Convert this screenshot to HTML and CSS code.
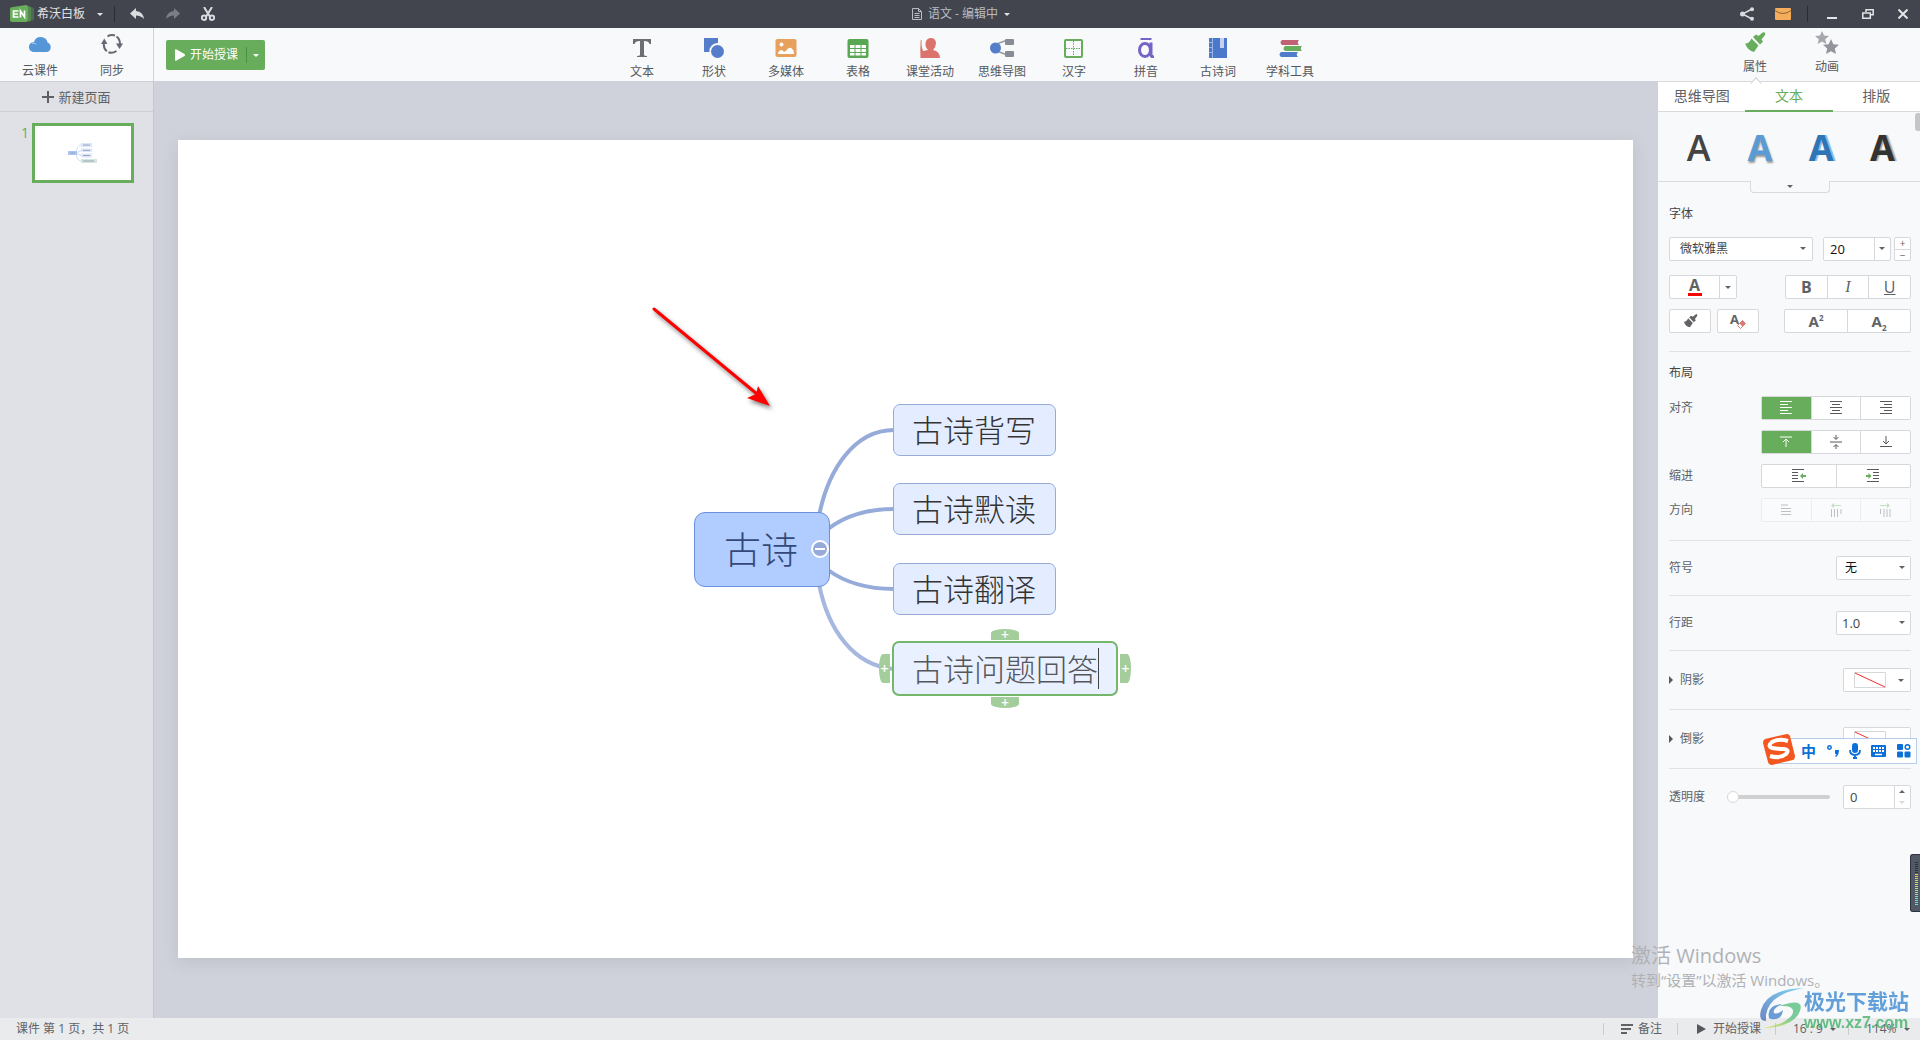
FILE: index.html
```html
<!DOCTYPE html>
<html lang="zh-CN">
<head>
<meta charset="utf-8">
<title>希沃白板</title>
<link rel="stylesheet" href="styles.css">
</head>
<body>
<div class="app">
  <header class="titlebar">
    <div class="title-left">
      <button class="brand" type="button">
        <svg width="24" height="18" viewBox="0 0 24 18"><path d="M20 2l4 1v12l-4 1z" fill="#4a6b4d"/><path d="M18 1l3 1v14l-3 1z" fill="#55894f"/><path d="M3 2L16 0q2 0 2 2v13q0 2-2 2H2q-2 0-2-2V4q0-2 3-2z" fill="#67ad5b"/><path d="M8.500 6H3.500v6h5M3.500 9h4.500M10.500 12.500V6l4 6V5.500" fill="none" stroke="#fff" stroke-width="1.700"/></svg>
        <span>希沃白板</span><i class="caret"></i>
      </button>
      <i class="title-sep"></i>
      <button class="icon-btn" type="button" aria-label="撤销"><svg width="14" height="12" viewBox="0 0 14 12"><path d="M0 5.500L6 0v3q7 .5 8 8Q11 7.500 6 7.500V11z" fill="#d9dbdf"/></svg></button>
      <button class="icon-btn" type="button" aria-label="重做"><svg width="14" height="12" viewBox="0 0 14 12"><path d="M14 5.500L8 0v3Q1 3.500 0 11q3-3.500 8-3.500V11z" fill="#7b7e87"/></svg></button>
      <button class="icon-btn" type="button" aria-label="剪切"><svg width="14" height="14" viewBox="0 0 14 14" fill="none" stroke="#d9dbdf" stroke-width="2"><path d="M3 0l5.500 9M11 0L5.500 9"/><circle cx="3" cy="10.700" r="2.200"/><circle cx="11" cy="10.700" r="2.200"/></svg></button>
    </div>
    <button class="doc-title" type="button">
      <svg width="10" height="12" viewBox="0 0 10 12" fill="none" stroke="#b9bcc2"><path d="M.5.500h6l3 3v8h-9zM6.500.500v3h3M2.500 5.500h5M2.500 7.500h5M2.500 9.500h5"/></svg>
      <span>语文 - 编辑中</span><i class="caret"></i>
    </button>
    <div class="title-right">
      <button class="icon-btn" type="button" aria-label="分享"><svg width="14" height="14" viewBox="0 0 14 14"><path d="M12 2L2.500 7l9.500 5" fill="none" stroke="#d9dbdf" stroke-width="1.500"/><g fill="#d9dbdf"><circle cx="2.500" cy="7" r="2.500"/><circle cx="12" cy="2.200" r="2"/><circle cx="12" cy="11.800" r="2"/></g></svg></button>
      <button class="icon-btn" type="button" aria-label="消息"><svg width="16" height="12" viewBox="0 0 16 12"><rect width="16" height="12" rx="1" fill="#f5ad5c"/><path d="M0 2.500q8 6 16 0" fill="none" stroke="#8d6436"/></svg></button>
      <i class="title-sep"></i>
      <button class="icon-btn" type="button" aria-label="最小化"><svg width="10" height="12"><path d="M0 9h10v2H0z" fill="#e3e4e7"/></svg></button>
      <button class="icon-btn" type="button" aria-label="还原"><svg width="12" height="10" viewBox="0 0 12 10" fill="none" stroke="#e3e4e7" stroke-width="1.500"><path d="M4 3V.8h7.200v5H9M.8 4h7.500v5.200H.8z"/></svg></button>
      <button class="icon-btn" type="button" aria-label="关闭"><svg width="10" height="10" viewBox="0 0 10 10"><path d="M.5.500l9 9M9.500.500l-9 9" stroke="#e3e4e7" stroke-width="2"/></svg></button>
    </div>
  </header>

  <div class="toolbar">
    <div class="tool-left">
      <div class="tool-cloud">
        <button class="tool" type="button"><svg width="24" height="18" viewBox="0 0 24 18"><path d="M5 17a5 5 0 0 1-1-9.500Q5.500 7 6 7a7 7 0 0 1 13.500.5A5 5 0 0 1 19 17z" fill="#5596d8"/><path d="M4 8.500q3-1 4.500 1" fill="none" stroke="#a9cbee"/></svg><span>云课件</span></button>
        <button class="tool" type="button"><svg width="22" height="20" viewBox="0 0 22 20"><g fill="none" stroke="#666a70" stroke-width="2"><path d="M6.500 2.300Q10 .3 14 1.500M15.500 2.500Q19.500 5.500 18.800 11M15.500 17Q11.500 19.700 7.500 18.300M5.800 17.300Q2 14 3 8"/></g><path d="M15 9.500h7l-3.500 5.500zM0 10h6.500L3.300 4.500z" fill="#666a70"/></svg><span>同步</span></button>
      </div>
      <div class="start">
        <button class="start-main" type="button"><svg width="10" height="12" viewBox="0 0 10 12"><path d="M0 1q0-1 1.500-.5L9.500 5q1 1 0 2l-8 4.500Q0 12 0 11z" fill="#fff"/></svg><span>开始授课</span></button>
        <button class="start-more" type="button" aria-label="更多"><i class="caret"></i></button>
      </div>
    </div>
    <nav class="tools">
      <button class="tool" type="button"><svg width="22" height="20" viewBox="0 0 22 20"><path d="M2 1h18v5h-1.500Q18 3 13 3v14q0 1 3 1v1H6v-1q3 0 3-1V3Q4 3 3.500 6H2z" fill="#6b6e73"/></svg><span>文本</span></button>
      <button class="tool" type="button"><svg width="22" height="20" viewBox="0 0 22 20"><path d="M1 0h14v5a8 8 0 0 0-8.500 9H1z" fill="#567dca"/><circle cx="14.500" cy="13.500" r="6.500" fill="#567dca"/></svg><span>形状</span></button>
      <button class="tool" type="button"><svg width="22" height="20" viewBox="0 0 22 20"><rect x=".5" y="1" width="21" height="18" rx="2" fill="#e8a15c"/><circle cx="6.500" cy="6.500" r="2" fill="#fff"/><path d="M3 16q0-3 3-4 2 0 3 2 2-1 3-2.500Q14 9 16 10q3 1.500 3 6z" fill="#fff"/></svg><span>多媒体</span></button>
      <button class="tool" type="button"><svg width="22" height="20" viewBox="0 0 22 20"><rect x=".5" y="1" width="21" height="19" rx="2" fill="#59a653"/><path d="M3 7h4.500v3H3zM8.500 7h5v3h-5zM14.500 7H19v3h-4.500zM3 11h4.500v3H3zM8.500 11h5v3h-5zM14.500 11H19v3h-4.500zM3 15h4.500v2.500H3zM8.500 15h5v2.500h-5zM14.500 15H19v2.500h-4.500z" fill="#fff"/></svg><span>表格</span></button>
      <button class="tool" type="button"><svg width="22" height="20" viewBox="0 0 22 20"><path d="M2.500 2Q2 8 4 13l5-1q-3-3-2.500-7 1-5 5.500-5t5 5q0 4-3 7 7 1.500 7 8H1.500Q1 12 1.700 2z" fill="#d9736c"/></svg><span>课堂活动</span></button>
      <button class="tool" type="button"><svg width="26" height="20" viewBox="0 0 26 20"><path d="M9 5.500l8-3M9 13.500l8 3" stroke="#9a9ca2" stroke-width="1.500"/><circle cx="6.500" cy="10" r="5.500" fill="#567dca"/><rect x="16" y="1" width="9" height="6" rx="1" fill="#878c96"/><rect x="16" y="13" width="9" height="6" rx="1" fill="#878c96"/></svg><span>思维导图</span></button>
      <button class="tool" type="button"><svg width="22" height="20" viewBox="0 0 22 20" fill="none" stroke="#67ad5b"><rect x="2" y="2" width="17" height="17" rx="1" stroke-width="2"/><path d="M10.500 3v15M3 10.500h15" stroke-dasharray="1.500 1"/></svg><span>汉字</span></button>
      <button class="tool" type="button"><svg width="22" height="20" viewBox="0 0 22 20" fill="none" stroke="#7663c6"><path d="M5.500 1h11" stroke-width="2"/><ellipse cx="10" cy="12" rx="5.500" ry="6.500" stroke-width="3"/><path d="M16 4.500v12.500q0 2 3 1.700" stroke-width="3"/></svg><span>拼音</span></button>
      <button class="tool" type="button"><svg width="22" height="20" viewBox="0 0 22 20"><path d="M2 0h18v20H2z" fill="#4c78cc"/><path d="M13 0h4v10h-4z" fill="#c3d1ee"/><path d="M5.500 0v20M2 4.500h3M2 9.500h3M2 14.500h3" stroke="#9cb6e5"/></svg><span>古诗词</span></button>
      <button class="tool" type="button"><svg width="24" height="20" viewBox="0 0 24 20"><path d="M4 2h17q-2.500 2.500 0 5H4Q1 4.500 4 2z" fill="#bf6274"/><path d="M7 8h17q-2.500 2.500 0 5H7q-3-2.500 0-5z" fill="#67ad5b"/><path d="M3 14h17q-2.500 2.500 0 5H3q-3-2.500 0-5z" fill="#4f7ccb"/></svg><span>学科工具</span></button>
    </nav>
    <div class="tool-right">
      <button class="tool mode current" type="button"><svg width="22" height="21" viewBox="0 0 22 21" fill="#67ad5b"><path d="M20 0q2 1 1 3l-3.500 4.500 1.500 2-3 3L9 5l3-2.500 2.500 1.500L18 1z"/><path d="M7.500 6.500l7 7-4.500 6.500Q4 19 1 11.500q4 .5 6.500-5z"/></svg><span>属性</span></button>
      <button class="tool mode" type="button"><svg width="24" height="23" viewBox="0 0 24 23" fill="#92959b"><path d="M7 0l2 4.500 5 .5-3.800 3.300L11.400 13 7 10.500 2.600 13l1.200-4.700L0 5l5-.5z" fill="#a4a7ac"/><path d="M16 8l2.400 5.200 5.600.6-4.200 3.800L21 23l-5-2.800L11 23l1.200-5.400L8 13.800l5.600-.6z"/></svg><span>动画</span></button>
    </div>
  </div>

  <main class="workspace">
    <aside class="pages">
      <button class="new-page" type="button"><svg width="12" height="12"><path d="M6 0v12M0 6h12" stroke="#5c5f64" stroke-width="2"/></svg><span>新建页面</span></button>
      <div class="page-item">
        <span class="page-no">1</span>
        <button class="thumb" type="button" aria-label="第 1 页">
          <svg width="32" height="22" viewBox="0 0 32 22"><g fill="none" stroke="#cfdcf3"><path d="M9 11Q10 3 14 3M9 11l5-2.500M9 11l5 2.500M9 11q1 8 5 8"/></g><path d="M1 9h9v4H1z" fill="#a9c6f7"/><path d="M14 1h11v4H14zM14 6.500h11v3.500H14zM14 11.500h11v4H14z" fill="#dde7fb"/><rect x="14" y="17" width="16" height="4" fill="#d5e6df"/><path d="M3 11h5M16 3h7M16 8.300h7M16 13.500h7M16 19h11" stroke="#9aa3b8"/></svg>
        </button>
      </div>
    </aside>

    <section class="stage">
      <div class="slide">
        <svg class="links" width="1000" height="640" viewBox="0 0 1000 640">
          <g fill="none" stroke="#96abda" stroke-width="4"><path d="M641 376C650 330 676 290 716 290M650 389Q676 369 716 369M650 430Q676 449 716 449"/><path d="M641 444C650 490 676 526 716 529" stroke="#a6b8e0"/></g>
          <g class="pointer" fill="#f00" stroke="#f00"><path d="M476 169l103 85" stroke-width="3" stroke-linecap="round"/><path d="M592 266l-12-20-2 8-9 4z" stroke="none"/></g>
        </svg>
        <div class="node root">古诗</div>
        <button class="fold" type="button" aria-label="收起"></button>
        <div class="node child c1">古诗背写</div>
        <div class="node child c2">古诗默读</div>
        <div class="node child c3">古诗翻译</div>
        <div class="node child c4">古诗问题回答<i class="cursor"></i></div>
        <button class="add add-top" type="button">+</button>
        <button class="add add-left" type="button">+</button>
        <button class="add add-right" type="button">+</button>
        <button class="add add-bottom" type="button">+</button>
      </div>
    </section>

    <aside class="panel">
      <div class="tabs">
        <button type="button">思维导图</button><button class="on" type="button">文本</button><button type="button">排版</button>
      </div>
      <div class="presets">
        <button class="a1" type="button">A</button><button class="a2" type="button">A</button><button class="a3" type="button">A</button><button class="a4" type="button">A</button>
        <button class="expand" type="button" aria-label="展开"><i class="caret"></i></button>
        <i class="scroll"></i>
      </div>

      <div class="section font">
        <h2>字体</h2>
        <div class="row">
          <label class="pick family"><select aria-label="字体"><option>微软雅黑</option></select></label>
          <div class="row-end">
            <label class="pick size"><select aria-label="字号"><option>20</option></select></label>
            <div class="steps"><button type="button">+</button><button type="button">−</button></div>
          </div>
        </div>
        <div class="row">
          <div class="group color"><button type="button" aria-label="文字颜色"><span class="ink">A</span></button><button class="more" type="button" aria-label="更多颜色"><i class="caret"></i></button></div>
          <div class="group biu"><button type="button"><b>B</b></button><button type="button"><em>I</em></button><button type="button"><u>U</u></button></div>
        </div>
        <div class="row">
          <div class="pair">
            <div class="group brush"><button type="button" aria-label="格式刷"><svg width="15" height="14" viewBox="0 0 22 21" fill="#606266"><path d="M20 0q2 1 1 3l-3.500 4.500 1.500 2-3 3L9 5l3-2.500 2.500 1.500L18 1z"/><path d="M7.500 6.500l7 7-4.500 6.500Q4 19 1 11.500q4 .5 6.500-5z"/></svg></button></div>
            <div class="group brush"><button type="button" aria-label="清除格式"><span class="clear">A</span><svg width="9" height="9" viewBox="0 0 9 9"><path d="M5.500.500l3 3-5 5-3-3z" fill="#fff" stroke="#dc7b76"/><path d="M5.500.500l3 3-3 3-3-3z" fill="#dc7b76"/></svg></button></div>
          </div>
          <div class="group script"><button type="button"><b>A<sup>2</sup></b></button><button type="button"><b>A<sub>2</sub></b></button></div>
        </div>
      </div>

      <div class="section layout">
        <h2>布局</h2>
        <div class="row"><span>对齐</span>
          <div class="group seg">
            <button class="on" type="button" aria-label="左对齐"><svg width="12" height="14"><path d="M0 .5h12M0 3.500h8M0 6.500h12M0 9.500h8M0 12.500h12"/></svg></button>
            <button type="button" aria-label="居中"><svg width="12" height="14"><path d="M0 .5h12M2 3.500h8M0 6.500h12M2 9.500h8M0 12.500h12"/></svg></button>
            <button type="button" aria-label="右对齐"><svg width="12" height="14"><path d="M0 .5h12M4 3.500h8M0 6.500h12M4 9.500h8M0 12.500h12"/></svg></button>
          </div></div>
        <div class="row"><span></span>
          <div class="group seg">
            <button class="on" type="button" aria-label="顶端对齐"><svg width="12" height="12"><path d="M0 1h12M6 11V3M3 6l3-3 3 3"/></svg></button>
            <button type="button" aria-label="垂直居中"><svg width="12" height="14"><path d="M0 7h12M6 0v4M3.500 2L6 4.500 8.500 2M6 14v-4M3.500 12L6 9.500 8.500 12"/></svg></button>
            <button type="button" aria-label="底端对齐"><svg width="12" height="12"><path d="M0 10.500h12M6 0v8M3 5l3 3 3-3"/></svg></button>
          </div></div>
        <div class="row"><span>缩进</span>
          <div class="group seg">
            <button type="button" aria-label="减少缩进"><svg width="14" height="14"><path d="M0 .5h12M0 3.500h6M0 6.500h6M0 9.500h6M0 12.500h12"/><path d="M8 7l3-3v2h3v2h-3v2z" class="tip"/></svg></button>
            <button type="button" aria-label="增加缩进"><svg width="14" height="14"><path d="M1 .5h12M7 3.500h6M7 6.500h6M7 9.500h6M1 12.500h12"/><path d="M5.500 7l-3-3v2H0v2h2.500v2z" class="tip"/></svg></button>
          </div></div>
        <div class="row"><span>方向</span>
          <div class="group seg off">
            <button type="button" disabled aria-label="横排"><svg width="10" height="12"><path d="M0 1h7M0 4.500h10M0 7.500h10M0 10.500h10"/></svg></button>
            <button type="button" disabled aria-label="竖排向左"><svg width="11" height="14"><path d="M.5 6v8M3.500 6v8M6.500 6v8M10 6v5"/><path d="M0 2.500l3-2.500v2h7v1H3v2z" class="tip"/></svg></button>
            <button type="button" disabled aria-label="竖排向右"><svg width="11" height="14"><path d="M.5 6v5M4 6v8M7 6v8M10 6v8"/><path d="M10 2.500L7 0v2H0v1h7v2z" class="tip"/></svg></button>
          </div></div>
      </div>

      <div class="section"><div class="row"><label for="bullet">符号</label><span class="pick short"><select class="dark" id="bullet"><option>无</option></select></span></div></div>
      <div class="section"><div class="row"><label for="leading">行距</label><span class="pick short tight"><select id="leading"><option>1.0</option></select></span></div></div>
      <div class="section effect"><div class="row"><span class="fold-label">阴影</span><button class="swatch" type="button" aria-label="阴影样式"><svg width="32" height="16"><path d="M.5.500h31v15H.5z" fill="#fff" stroke="#d6d8db"/><path d="M1 1l30 14" stroke="#f22d2d"/></svg><i class="caret"></i></button></div></div>
      <div class="section effect"><div class="row"><span class="fold-label">倒影</span><button class="swatch" type="button" aria-label="倒影样式"><svg width="32" height="16"><path d="M.5.500h31v15H.5z" fill="#fff" stroke="#d6d8db"/><path d="M1 1l30 14" stroke="#f22d2d"/></svg><i class="caret"></i></button></div></div>
      <div class="section opacity"><div class="row"><label for="alpha">透明度</label><input class="range" id="alpha" type="range" min="0" max="100" value="0">
        <div class="spin"><input type="text" value="0" aria-label="透明度数值"><span class="arrows"><button type="button" aria-label="增加"><i class="caret up"></i></button><button type="button" aria-label="减少"><i class="caret faint"></i></button></span></div></div></div>
    </aside>
  </main>

  <footer class="status">
    <span>课件 第 1 页，共 1 页</span>
    <div class="status-right">
      <button class="s-note" type="button"><svg width="12" height="10"><path d="M0 1h12M0 5h10M0 9h6" stroke="#606266" stroke-width="2"/></svg><span>备注</span></button>
      <button class="s-start" type="button"><svg width="9" height="10"><path d="M0 0l9 5-9 5z" fill="#55585d"/></svg><span>开始授课</span></button>
      <button class="s-pick" type="button"><span>16 : 9</span><i class="caret"></i></button>
      <button class="s-pick" type="button"><span>114%</span><i class="caret"></i></button>
    </div>
  </footer>

  <div class="ime">
    <svg class="ime-logo" width="32" height="31" viewBox="0 0 32 31"><path d="M2 5L24 0q2 0 3 2l5 20q0 3-2 4L9 31q-3 0-4-3L0 9q0-3 2-4z" fill="#f4561f"/><path d="M25 7Q16 4 9 8q-5 4 0 6 5 1 12 1 6 1 2 5-6 5-16 2" fill="none" stroke="#fff" stroke-width="4"/></svg>
    <span class="ime-zh">中</span>
    <svg width="12" height="12" viewBox="0 0 12 12"><circle cx="2.500" cy="2.500" r="1.700" fill="none" stroke="#0b70d8" stroke-width="1.500"/><path d="M8 5h4q0 5-3 7l-1-1q1.500-1 1.500-2H8z" fill="#0b70d8"/></svg>
    <svg width="12" height="16" viewBox="0 0 12 16"><rect x="3" y="0" width="6" height="10" rx="3" fill="#0b70d8"/><path d="M1 7q0 5 5 5t5-5M6 12v4M4 15h4" fill="none" stroke="#0b70d8" stroke-width="1.800"/></svg>
    <svg width="15" height="12" viewBox="0 0 15 12"><rect width="15" height="12" rx="1" fill="#0b70d8"/><path d="M2 3h11M2 6h11" stroke="#fff" stroke-width="2" stroke-dasharray="2 1"/><path d="M4 9.500h7" stroke="#fff" stroke-width="1.500"/></svg>
    <svg width="14" height="14" viewBox="0 0 14 14" fill="#0b70d8"><rect width="6" height="6" rx="1"/><rect y="7.500" width="6" height="6" rx="1"/><rect x="7.500" y="7.500" width="6" height="6" rx="1"/><circle cx="10.500" cy="3" r="2.300" fill="none" stroke="#0b70d8" stroke-width="1.500"/></svg>
  </div>
  <div class="meter"><i></i></div>
  <div class="activate"><p class="big">激活 Windows</p><p>转到“设置”以激活 Windows。</p></div>
  <div class="site">
    <svg width="44" height="42" viewBox="0 0 44 42"><defs><linearGradient id="sky" x1="0" y1="1" x2="1" y2="0"><stop offset="0" stop-color="#4d6bb4"/><stop offset="1" stop-color="#62cdf6"/></linearGradient><linearGradient id="leaf" x1="0" y1="1" x2="1" y2="0"><stop offset="0" stop-color="#e3e34c"/><stop offset=".6" stop-color="#5cc083"/></linearGradient></defs><path d="M44 0Q7 1 1 22q-3 11 5 11 0-4 0-6Q9 6 44 0z" fill="url(#sky)"/><path d="M19 18q26-9 21 5Q34 39 3 40q21-3 29-13 5-10-13-9z" fill="url(#leaf)"/><path d="M9 30q-3-13 13-14-10 5-8 9 3 2 9-3-1 8-7 9-5 1-7-1z" fill="#4b86cc"/></svg>
    <div><strong>极光下载站</strong><span>www.xz7.com</span></div>
  </div>
</div>
</body>
</html>
```
FILE: styles.css
```css
* { box-sizing: border-box; }
body {
  margin: 0;
  font: 12px/16px "Open Sans", "Noto Sans CJK SC", sans-serif;
  color: #606266;
}
button, select, input {
  font: inherit;
  color: inherit;
  margin: 0;
  padding: 0;
  border: 0;
  background: none;
}
svg { flex: none; display: block; }
.app { position: relative; display: flex; flex-direction: column; min-height: 100vh; overflow: hidden; }
.caret { flex: none; border: 3px solid transparent; border-top-color: currentColor; border-bottom: 0; width: 0; height: 0; }
.caret.up { transform: rotate(180deg); }

/* title bar */
.titlebar { display: grid; grid-template-columns: 1fr auto 1fr; height: 28px; background: #42454e; color: #e3e4e7; }
.title-left, .title-right, .brand, .doc-title { display: flex; align-items: center; }
.title-left { padding-left: 10px; }
.title-right { justify-content: flex-end; }
.brand span { margin: 0 12px 0 3px; }
.title-sep { width: 1px; height: 16px; background: #2a2c32; margin: 0 6px; }
.brand + .title-sep { margin: 0 4px 0 11px; }
.icon-btn { width: 36px; height: 28px; display: flex; align-items: center; justify-content: center; }
.icon-btn:last-child { width: 34px; }
.doc-title { color: #b9bcc2; gap: 6px; padding-left: 2px; }
.doc-title .caret { color: #e3e4e7; }

/* toolbar */
.toolbar { display: grid; grid-template-columns: 1fr auto 1fr; height: 53px; background: #f7f9fb; }
.tool { width: 72px; height: 52px; display: flex; flex-direction: column; align-items: center; justify-content: flex-end; gap: 5px; color: #55585d; white-space: nowrap; }
.tool svg { margin: auto 0; }
.tool-left { display: flex; }
.tool-cloud { display: flex; padding: 2px 5px 0 4px; border-right: 1px solid #d0d2d8; }
.tool-cloud .tool { height: 49px; }
.start { display: flex; height: 30px; margin: 12px 0 0 12px; border-radius: 2px; background: #67ad5b; color: #fff; align-items: center; }
.start-main { display: flex; align-items: center; gap: 5px; padding: 0 8px 0 9px; }
.start-more { width: 19px; height: 16px; display: flex; align-items: center; justify-content: center; border-left: 1px solid #4d8e45; }
.tools { display: flex; padding-left: 12px; }
.tools .tool { padding-top: 10px; gap: 0; }
.tools .tool svg { margin: 0 0 auto; }
.tool-right { display: flex; justify-content: flex-end; padding-right: 57px; }
.mode { height: 47px; position: relative; padding-top: 3px; }
.mode.current::after { content: ""; position: absolute; left: 33px; top: 51px; width: 7px; height: 7px; background: #fff; border: solid #d0d2d8; border-width: 1px 0 0 1px; transform: rotate(45deg); }

/* page list */
.workspace { flex: 1; display: flex; background: #cfd2da; }
.pages { flex: none; width: 154px; background: #dfe1e6; border-right: 1px solid #c4c7ce; }
.new-page { width: 100%; height: 31px; display: flex; align-items: center; justify-content: center; gap: 4px; font-size: 13px; border: solid #cccfd5; border-width: 1px 0; }
.page-item { display: flex; gap: 5px; padding: 11px 19px 0 21px; }
.page-no { width: 6px; font-size: 14px; line-height: 20px; color: #67ad5b; }
.thumb { flex: 1; height: 60px; border: 3px solid #67ad5b; background: #fff; display: flex; align-items: center; justify-content: center; }

/* canvas */
.stage { flex: 1; min-width: 0; display: flex; padding: 59px 25px 60px 24px; }
.slide { flex: 1; position: relative; background: #fff; box-shadow: 0 4px 16px rgba(60, 64, 76, .12); overflow: hidden; }
.links { position: absolute; left: 0; top: 0; }
.pointer { filter: drop-shadow(2px 3px 2px rgba(0, 0, 0, .5)); }
.node { position: absolute; display: flex; align-items: center; border: 1px solid #96abda; border-radius: 7px; background: #e3edff; color: #333; white-space: nowrap; font-weight: 300; }
.root { left: 516px; top: 372px; width: 136px; height: 75px; padding-left: 29px; border-color: #6a8fdf; border-radius: 11px; background: #b1cdff; color: #34497a; font-size: 37px; }
.child { left: 715px; width: 163px; height: 52px; padding-left: 18px; font-size: 31px; }
.c1 { top: 264px; }
.c2 { top: 343px; }
.c3 { top: 423px; }
.c4 { top: 501px; left: 714px; width: 226px; height: 55px; border: 2px solid #74b76b; background: #e9f0ff; color: #55575b; }
.cursor { width: 1px; height: 41px; background: #444; }
.fold { position: absolute; left: 633px; top: 400px; width: 18px; height: 18px; border: 2px solid #fff; border-radius: 9px; background: #96abda; }
.fold::after { content: ""; display: block; width: 10px; height: 2px; margin: auto; background: #fff; }
.add { position: absolute; display: flex; align-items: center; justify-content: center; background: #a3ce9c; color: #fff; font-size: 14px; font-weight: 600; line-height: 10px; }
.add-top, .add-bottom { left: 813px; width: 28px; height: 11px; }
.add-top { top: 489px; border-radius: 14px 14px 0 0 / 4px 4px 0 0; }
.add-bottom { top: 557px; border-radius: 0 0 14px 14px / 0 0 4px 4px; }
.add-left, .add-right { top: 514px; width: 11px; height: 29px; }
.add-left { left: 701px; border-radius: 4px 0 0 4px / 14px 0 0 14px; }
.add-right { left: 942px; border-radius: 0 4px 4px 0 / 0 14px 14px 0; }

/* property panel */
.panel { flex: none; width: 262px; background: #f7f9fb; }
.tabs { display: flex; height: 31px; background: #fff; border: solid #d8dade; border-width: 1px 0; font-size: 14px; }
.tabs button { flex: 1; height: 30px; border-bottom: 2px solid transparent; }
.tabs .on { color: #67ad5b; border-color: #67ad5b; }
.presets { position: relative; display: flex; height: 70px; padding: 0 7px 0 10px; border-bottom: 1px solid #d8dade; }
.presets > button { flex: 1; padding-top: 2px; font-size: 36px; line-height: 40px; font-weight: 700; }
.presets .a1 { color: #444; font-weight: 600; }
.presets .a2 { color: #5b9bd5; text-shadow: 1px 2px 2px #999; }
.presets .a3 { color: #2e75b6; text-shadow: 2px 0 0 #8dbdea; }
.presets .a4 { color: #333; text-shadow: 2px 0 1px #aaa; }
.presets .expand { position: absolute; left: 92px; top: 69px; width: 80px; height: 12px; padding: 0; border: 1px solid #d8dade; border-top: 0; border-radius: 0 0 4px 4px; background: #f7f9fb; display: flex; align-items: center; justify-content: center; }
.scroll { position: absolute; right: 0; top: 1px; width: 5px; height: 18px; border-radius: 3px 0 0 3px; background: #c4c6ca; }
.section { margin: 0 9px 0 11px; padding: 15px 0; border-bottom: 1px solid #e0e2e5; }
.section.font { padding: 22px 0 18px; }
.section.layout { padding: 11px 0 18px; }
.section.effect { padding: 17px 0; }
.section.opacity { padding-top: 16px; border: 0; }
.section h2 { margin: 0 0 13px; font-size: 12px; line-height: 20px; font-weight: 400; color: #444; }
.row { display: flex; justify-content: space-between; align-items: center; height: 24px; }
.row + .row { margin-top: 10px; }
.font .row:nth-child(3) { margin-top: 14px; }
.row-end { display: flex; gap: 3px; }
.pair { display: flex; gap: 6px; }
.group, .pick, .steps, .swatch, .spin { display: flex; height: 24px; border: 1px solid #d6d8db; border-radius: 2px; background: #fff; }
.group button { flex: 1; display: flex; align-items: center; justify-content: center; }
.group button + button { border-left: 1px solid #d6d8db; }
.pick { position: relative; }
.pick::after { content: ""; position: absolute; right: 6px; top: 9px; border: 3px solid transparent; border-top-color: #606266; border-bottom: 0; }
.pick select { width: 100%; appearance: none; padding-left: 10px; color: #444; }
.pick .dark, .size select { color: #111; }
.family { width: 144px; }
.size { width: 68px; }
.size::before { content: ""; position: absolute; right: 15px; top: 0; width: 1px; height: 22px; background: #d6d8db; }
.size select { padding-left: 6px; font-size: 13px; }
.size::after { right: 5px; }
.short { width: 75px; }
.short::after { right: 5px; }
.short select { padding-left: 8px; }
.short.tight select { padding-left: 5px; font-size: 13px; }
.steps { width: 17px; flex-direction: column; }
.steps button { flex: 1; font-size: 10px; line-height: 8px; }
.steps button + button { border-top: 1px solid #d6d8db; }
.color { width: 68px; }
.color .more { flex: none; width: 17px; }
.ink { width: 14px; border-bottom: 3px solid #f00; font-size: 16px; line-height: 15px; font-weight: 700; text-align: center; }
.biu { width: 126px; font-size: 16px; }
.biu em { font-family: "Liberation Serif", serif; }
.brush { width: 42px; }
.clear { font-size: 13px; font-weight: 700; line-height: 12px; margin-bottom: 4px; }
.brush .clear + svg { margin: 6px 0 0 -2px; }
.script { width: 127px; font-size: 15px; }
.script sup, .script sub { font-size: 8px; line-height: 0; }
.seg { width: 150px; }
.seg .on { background: #67ad5b; }
.seg svg { fill: none; stroke: #55585d; }
.seg .on svg { stroke: #fff; }
.seg .tip { fill: #67ad5b; stroke: none; }
.off { opacity: .35; }
.fold-label::before { content: ""; display: inline-block; margin-right: 7px; border: 4px solid transparent; border-left-color: #55585d; border-right: 0; }
.swatch { width: 68px; align-items: center; padding-left: 10px; gap: 12px; }
.range { appearance: none; width: 103px; height: 12px; margin-left: 8px; }
.range::-webkit-slider-runnable-track { height: 4px; border-radius: 2px; background: #d0d0d0; }
.range::-webkit-slider-thumb { appearance: none; width: 12px; height: 12px; margin-top: -4px; border: 1px solid #d6d8db; border-radius: 6px; background: #fff; }
.spin { width: 68px; }
.spin input { width: 50px; padding-left: 6px; font-size: 13px; color: #444; }
.arrows { flex: 1; display: flex; flex-direction: column; border-left: 1px solid #d6d8db; }
.arrows button { flex: 1; display: flex; align-items: center; justify-content: center; }
.faint { color: #e0d8d8; }

/* status bar */
.status { display: flex; justify-content: space-between; align-items: center; height: 22px; padding-left: 16px; background: #e9ebed; white-space: nowrap; }
.status-right { display: flex; }
.status-right button { display: flex; align-items: center; border-left: 1px solid #c9cbcf; height: 12px; padding-left: 17px; }
.status-right .s-note { width: 74px; gap: 5px; }
.status-right .s-start { width: 98px; gap: 7px; padding-left: 19px; }
.s-pick { width: 73px; gap: 7px; }
.s-pick:last-child { width: 72px; }

/* floating windows */
.ime { position: absolute; right: 3px; bottom: 276px; width: 148px; height: 26px; padding: 0 5px 0 31px; display: flex; align-items: center; justify-content: space-between; border: 1px solid #b5cdea; background: #fff; }
.ime-logo { position: absolute; left: -7px; top: -5px; }
.ime-zh { color: #0b70d8; font-size: 15px; font-weight: 700; }
.meter { position: absolute; right: 0; bottom: 128px; width: 10px; height: 58px; padding: 7px 2px 6px 4px; border: 1px solid #2f323b; border-right: 0; border-radius: 3px 0 0 3px; background: #515868; }
.meter i { display: block; height: 44px; background: repeating-linear-gradient(transparent 0 1px, #515868 1px 2px), linear-gradient(#2f323b 0 11px, #f0c35c 12px, #b9dc8a 26px, #5fe0d0); }
.activate { position: absolute; right: 91px; bottom: 49px; width: 198px; font-size: 15px; line-height: 22px; color: #afb1b5; white-space: nowrap; }
.activate p { margin: 0; }
.activate .big { font-size: 20px; line-height: 26px; }
.site { position: absolute; right: 10px; bottom: 8px; display: flex; opacity: .8; }
.site div { display: flex; flex-direction: column; width: 106px; white-space: nowrap; }
.site strong { font-size: 21px; line-height: 26px; color: #3f8ad2; }
.site span { font: 700 16px/18px "Liberation Sans", sans-serif; color: #46b36b; }
```
